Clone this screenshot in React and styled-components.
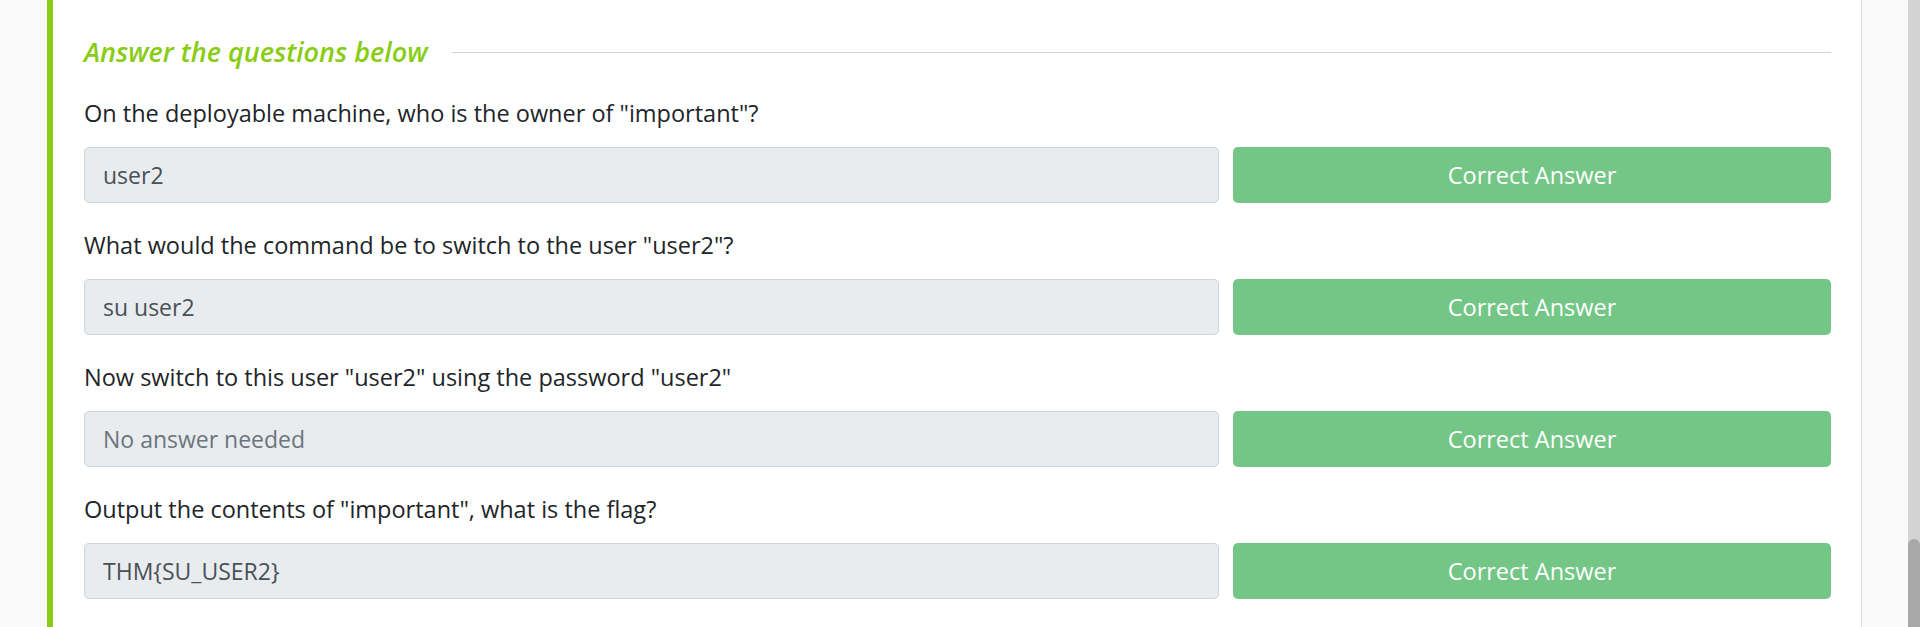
import React from "react";
import styled, { createGlobalStyle } from "styled-components";

const GlobalStyle = createGlobalStyle`
  html, body { margin: 0; padding: 0; height: 100%; overflow: hidden; }
  body { background: #f9f9f9; font-family: "Open Sans", "Noto Sans", sans-serif; }
  * { box-sizing: border-box; }
`;

const Page = styled.div`
  display: flex;
  height: 100vh;
  width: 100vw;
  overflow: hidden;
`;

const Main = styled.main`
  flex: 1;
  padding: 0 46px 0 47px;
  background: #f9f9f9;
  overflow: hidden;
`;

const Card = styled.section`
  background: #ffffff;
  border-left: 6px solid #88cc14;
  border-right: 1px solid #e0e0e0;
  padding: 34px 30px 40px 31px;
  min-height: 100vh;
`;

const HeadingRow = styled.div`
  display: flex;
  align-items: center;
  margin-bottom: 27px;
`;

const Heading = styled.h5`
  margin: 0;
  font-family: "Open Sans", "Noto Sans", sans-serif;
  font-style: italic;
  font-weight: 600;
  font-size: 27px;
  line-height: 36px;
  color: #88cc14;
  white-space: nowrap;
`;

const Rule = styled.div`
  flex: 1;
  height: 1px;
  background: #d2d2d2;
  margin-left: 24px;
`;

const Question = styled.div`
  margin-bottom: 26px;
`;

const Label = styled.p`
  margin: 0 0 18px;
  font-size: 23.5px;
  line-height: 32px;
  color: #212529;
`;

const AnswerRow = styled.div`
  display: grid;
  grid-template-columns: 1135px 1fr;
  gap: 14px;
`;

const AnswerInput = styled.input`
  height: 56px;
  width: 100%;
  padding: 0 18px;
  border: 1px solid #ced4da;
  border-radius: 5px;
  background: #e9ecef;
  font-family: "Open Sans", "Noto Sans", sans-serif;
  font-size: 23px;
  color: #495057;
  outline: none;
  &::placeholder { color: #6c757d; opacity: 1; }
`;

const SubmitButton = styled.button`
  height: 56px;
  border: none;
  border-radius: 5px;
  background: #73c686;
  color: #ffffff;
  font-family: "Open Sans", "Noto Sans", sans-serif;
  font-size: 23.5px;
  cursor: default;
`;

const ScrollTrack = styled.div`
  width: 12px;
  flex: none;
  background: #d3d3d3;
  display: flex;
  flex-direction: column;
`;

const ScrollThumb = styled.div`
  margin-top: 539px;
  flex: 1;
  background: #a8a8a8;
  border-radius: 6px 6px 0 0;
`;

const questions = [
  { q: 'On the deployable machine, who is the owner of "important"?', a: "user2" },
  { q: 'What would the command be to switch to the user "user2"?', a: "su user2" },
  { q: 'Now switch to this user "user2" using the password "user2"', a: "", placeholder: "No answer needed" },
  { q: 'Output the contents of "important", what is the flag?', a: "THM{SU_USER2}" },
];

export default function App() {
  return (
    <>
      <GlobalStyle />
      <Page>
        <Main>
          <Card>
            <HeadingRow>
              <Heading>Answer the questions below</Heading>
              <Rule />
            </HeadingRow>
            {questions.map((item, i) => (
              <Question key={i}>
                <Label>{item.q}</Label>
                <AnswerRow>
                  <AnswerInput readOnly value={item.a} placeholder={item.placeholder} />
                  <SubmitButton>Correct Answer</SubmitButton>
                </AnswerRow>
              </Question>
            ))}
          </Card>
        </Main>
        <ScrollTrack>
          <ScrollThumb />
        </ScrollTrack>
      </Page>
    </>
  );
}
